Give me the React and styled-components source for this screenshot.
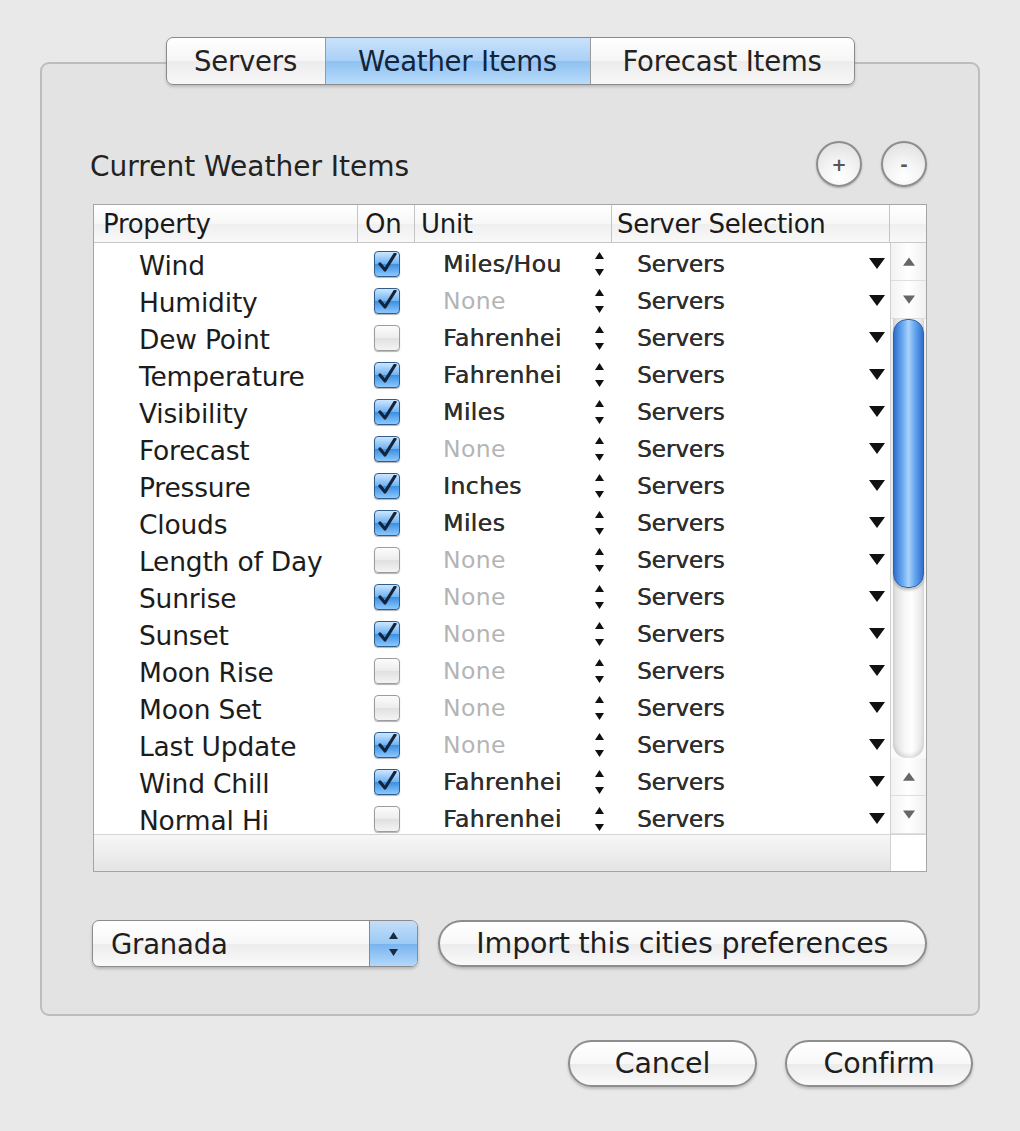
import React from 'react'
import styled, { createGlobalStyle } from 'styled-components'

const GlobalStyle = createGlobalStyle`
  html, body {
    margin: 0;
    padding: 0;
    background: #e9e9e9;
  }
  body {
    font-family: "DejaVu Sans", "Liberation Sans", sans-serif;
    color: #1c1c1c;
  }
`

const rows = [
  { name: 'Wind', on: true, unit: 'Miles/Hou' },
  { name: 'Humidity', on: true, unit: 'None', dim: true },
  { name: 'Dew Point', on: false, unit: 'Fahrenhei' },
  { name: 'Temperature', on: true, unit: 'Fahrenhei' },
  { name: 'Visibility', on: true, unit: 'Miles' },
  { name: 'Forecast', on: true, unit: 'None', dim: true },
  { name: 'Pressure', on: true, unit: 'Inches' },
  { name: 'Clouds', on: true, unit: 'Miles' },
  { name: 'Length of Day', on: false, unit: 'None', dim: true },
  { name: 'Sunrise', on: true, unit: 'None', dim: true },
  { name: 'Sunset', on: true, unit: 'None', dim: true },
  { name: 'Moon Rise', on: false, unit: 'None', dim: true },
  { name: 'Moon Set', on: false, unit: 'None', dim: true },
  { name: 'Last Update', on: true, unit: 'None', dim: true },
  { name: 'Wind Chill', on: true, unit: 'Fahrenhei' },
  { name: 'Normal Hi', on: false, unit: 'Fahrenhei' },
]

const Window = styled.div`
  width: 1020px;
  height: 1131px;
  box-sizing: border-box;
  padding-top: 37px;
  display: flex;
  flex-direction: column;
  align-items: center;
`

const TabBar = styled.div`
  display: flex;
  height: 48px;
  box-sizing: border-box;
  border: 1px solid #8a8a8a;
  border-radius: 7px;
  overflow: hidden;
  position: relative;
  z-index: 2;
  margin-bottom: -23px;
  box-shadow: 0 2px 3px rgba(0, 0, 0, 0.18);
  background: linear-gradient(#ffffff, #f6f6f6 50%, #ececec 51%, #f7f7f7);
`

const Tab = styled.div`
  width: ${p => p.w}px;
  display: flex;
  align-items: center;
  justify-content: center;
  font-size: 27.5px;
  letter-spacing: -0.2px;
  color: ${p => (p.active ? '#12233a' : '#222')};
  border-left: ${p => (p.first ? 'none' : '1px solid #9a9a9a')};
  background: ${p =>
    p.active
      ? 'linear-gradient(#c9e2fb, #a9d0f6 50%, #8fc1f1 51%, #b8dcfb)'
      : 'transparent'};
`

const GroupBox = styled.div`
  width: 940px;
  height: 954px;
  box-sizing: border-box;
  align-self: flex-start;
  margin-left: 40px;
  border: 2px solid #bdbdbd;
  border-radius: 9px;
  background: #e3e3e3;
  padding: 77px 51px 0 51px;
  display: flex;
  flex-direction: column;
`

const TitleRow = styled.div`
  height: 46px;
  display: flex;
  align-items: center;
  justify-content: space-between;
`

const Title = styled.div`
  font-size: 28px;
  color: #222;
  margin-left: -3px;
  padding-top: 4px;
`

const CircleGroup = styled.div`
  display: flex;
  gap: 19px;
`

const CircleButton = styled.div`
  width: 46px;
  height: 46px;
  box-sizing: border-box;
  border-radius: 50%;
  border: 2px solid #8d8d8d;
  background: radial-gradient(circle at 50% 80%, #ffffff 0%, #f4f4f4 40%, #dcdcdc 100%);
  box-shadow: 0 1px 2px rgba(0, 0, 0, 0.25);
  display: flex;
  align-items: center;
  justify-content: center;
  font-size: 18px;
  font-weight: bold;
  color: #555;
`

const Table = styled.div`
  margin-top: 17px;
  width: 834px;
  height: 668px;
  box-sizing: border-box;
  border: 1px solid #a5a5a5;
  background: #fff;
  display: flex;
  flex-direction: column;
`

const HeaderRow = styled.div`
  display: grid;
  grid-template-columns: 263px 57px 197px 278px 1fr;
  height: 37px;
  flex: none;
  border-bottom: 1px solid #c8c8c8;
  background: linear-gradient(#ffffff, #f7f7f7 50%, #efefef 51%, #f8f8f8);
`

const HeaderCell = styled.div`
  display: flex;
  align-items: center;
  padding-left: ${p => p.pad || 9}px;
  font-size: 26px;
  letter-spacing: -0.3px;
  color: #1a1a1a;
  overflow: hidden;
  white-space: nowrap;
  border-left: ${p => (p.first ? 'none' : '1px solid #c4c4c4')};
`

const Body = styled.div`
  flex: 1;
  display: flex;
  min-height: 0;
`

const RowList = styled.div`
  width: 796px;
  padding-top: 2px;
`

const Row = styled.div`
  display: grid;
  grid-template-columns: 263px 57px 197px 278px;
  height: 37px;
  align-items: center;
`

const PropCell = styled.div`
  padding-left: 45px;
  font-size: 26.5px;
  letter-spacing: -0.2px;
  color: #1c1c1c;
  padding-top: 3px;
  white-space: nowrap;
`

const OnCell = styled.div`
  display: flex;
  justify-content: center;
  padding-left: 3px;
`

const Check = styled.div`
  width: 26px;
  height: 26px;
  box-sizing: border-box;
  border-radius: 4px;
  border: 1px solid ${p => (p.on ? '#2f5d8c' : '#9c9c9c')};
  background: ${p =>
    p.on
      ? 'linear-gradient(#cde7ff, #6fb2f2 50%, #3d8fe0 51%, #8cc8ff)'
      : 'linear-gradient(#fcfcfc, #ececec 50%, #e0e0e0 51%, #f4f4f4)'};
  box-shadow: 0 1px 1px rgba(0, 0, 0, 0.3);
  display: flex;
  align-items: center;
  justify-content: center;
`

const UnitCell = styled.div`
  display: flex;
  align-items: center;
  justify-content: space-between;
  padding-left: 29px;
  padding-right: 5px;
`

const UnitText = styled.span`
  font-size: 23.5px;
  letter-spacing: 0.4px;
  color: ${p => (p.dim ? '#b4b4b4' : '#2e2e2e')};
  text-shadow: ${p => (p.dim ? 'none' : '0.5px 0 0 #2e2e2e')};
`

const ServerCell = styled.div`
  display: flex;
  align-items: center;
  justify-content: space-between;
  padding-left: 26px;
  padding-right: 4px;
  font-size: 23px;
  color: #2e2e2e;
  text-shadow: 0.5px 0 0 #2e2e2e;
`

const ScrollBar = styled.div`
  flex: 1;
  border-left: 1px solid #d0d0d0;
  display: flex;
  flex-direction: column;
  background: #fafafa;
`

const ArrowButton = styled.div`
  height: 37px;
  flex: none;
  display: flex;
  align-items: center;
  justify-content: center;
  border-bottom: 1px solid #dedede;
  background: linear-gradient(90deg, #f2f2f2, #ffffff 50%, #f0f0f0);
`

const Track = styled.div`
  flex: 1;
  margin: 0 2px;
  border-radius: 0 0 14px 14px;
  background: linear-gradient(90deg, #dcdcdc, #f8f8f8 40%, #ffffff 60%, #e2e2e2);
  box-shadow: inset 0 -3px 4px rgba(0, 0, 0, 0.12);
  display: flex;
  flex-direction: column;
`

const Thumb = styled.div`
  height: 267px;
  border-radius: 14px;
  border: 1px solid #2e62a8;
  background: linear-gradient(90deg, #2f6fd0, #6aaaf0 30%, #a9d2fb 50%, #6aaaf0 70%, #2f6fd0);
  box-shadow: 0 2px 3px rgba(0, 0, 0, 0.25);
`

const HScroll = styled.div`
  height: 36px;
  flex: none;
  display: flex;
  border-top: 1px solid #d4d4d4;
`

const HTrack = styled.div`
  width: 796px;
  background: linear-gradient(#f6f6f6, #ececec 60%, #e4e4e4);
`

const Corner = styled.div`
  flex: 1;
  background: #fff;
  border-left: 1px solid #d0d0d0;
`

const BottomRow = styled.div`
  margin-top: 48px;
  display: flex;
  gap: 20px;
  margin-left: -1px;
`

const Popup = styled.div`
  width: 326px;
  height: 47px;
  box-sizing: border-box;
  border: 1px solid #8c8c8c;
  border-radius: 7px;
  overflow: hidden;
  display: flex;
  box-shadow: 0 2px 3px rgba(0, 0, 0, 0.2);
  background: linear-gradient(#ffffff, #f7f7f7 50%, #ececec 51%, #fafafa);
`

const PopupLabel = styled.div`
  flex: 1;
  display: flex;
  align-items: center;
  padding-left: 18px;
  font-size: 27.5px;
  letter-spacing: -0.2px;
  color: #1e1e1e;
`

const PopupArrows = styled.div`
  width: 47px;
  display: flex;
  align-items: center;
  justify-content: center;
  border-left: 1px solid #6b8fb8;
  background: linear-gradient(#c3def9, #9ccaf4 50%, #78b3ee 51%, #b2d8fb);
`

const PillButton = styled.div`
  width: ${p => p.w}px;
  height: 47px;
  box-sizing: border-box;
  border: 2px solid #8d8d8d;
  border-radius: 24px;
  display: flex;
  align-items: center;
  justify-content: center;
  font-size: 28.5px;
  letter-spacing: -0.2px;
  white-space: nowrap;
  color: #1e1e1e;
  box-shadow: 0 2px 3px rgba(0, 0, 0, 0.2);
  background: linear-gradient(#ffffff, #f8f8f8 50%, #ebebeb 51%, #fafafa);
`

const Footer = styled.div`
  align-self: flex-end;
  margin-right: 47px;
  margin-top: 24px;
  display: flex;
  gap: 28px;
`

const Tri = ({ up, color = '#111', w = 16, h = 11 }) => (
  <svg width={w} height={h} viewBox="0 0 16 11">
    <path d={up ? 'M8 0 L16 11 L0 11 Z' : 'M0 0 L16 0 L8 11 Z'} fill={color} />
  </svg>
)

const Stepper = ({ color = '#111' }) => (
  <svg width="13" height="28" viewBox="0 0 13 28">
    <path d="M6.5 2 L11 9 L2 9 Z" fill={color} />
    <path d="M2 19 L11 19 L6.5 26 Z" fill={color} />
  </svg>
)

const CheckMark = () => (
  <svg width="22" height="22" viewBox="0 0 22 22">
    <path d="M4 11 L9 17 L19 1" fill="none" stroke="#14243a" strokeWidth="3.2" strokeLinecap="round" strokeLinejoin="round" />
  </svg>
)

export default function App() {
  return (
    <Window>
      <GlobalStyle />
      <TabBar>
        <Tab first w={158}>Servers</Tab>
        <Tab active w={264}>Weather Items</Tab>
        <Tab w={263}>Forecast Items</Tab>
      </TabBar>
      <GroupBox>
        <TitleRow>
          <Title>Current Weather Items</Title>
          <CircleGroup>
            <CircleButton>+</CircleButton>
            <CircleButton>-</CircleButton>
          </CircleGroup>
        </TitleRow>
        <Table>
          <HeaderRow>
            <HeaderCell first>Property</HeaderCell>
            <HeaderCell pad={7}>On</HeaderCell>
            <HeaderCell pad={6}>Unit</HeaderCell>
            <HeaderCell pad={5}>Server Selection</HeaderCell>
            <HeaderCell />
          </HeaderRow>
          <Body>
            <RowList>
              {rows.map(r => (
                <Row key={r.name}>
                  <PropCell>{r.name}</PropCell>
                  <OnCell>
                    <Check on={r.on}>{r.on && <CheckMark />}</Check>
                  </OnCell>
                  <UnitCell>
                    <UnitText dim={r.dim}>{r.unit}</UnitText>
                    <Stepper />
                  </UnitCell>
                  <ServerCell>
                    <span>Servers</span>
                    <Tri />
                  </ServerCell>
                </Row>
              ))}
            </RowList>
            <ScrollBar>
              <ArrowButton><Tri up color="#666" w={12} h={9} /></ArrowButton>
              <ArrowButton><Tri color="#666" w={12} h={9} /></ArrowButton>
              <Track>
                <Thumb />
              </Track>
              <ArrowButton><Tri up color="#666" w={12} h={9} /></ArrowButton>
              <ArrowButton><Tri color="#666" w={12} h={9} /></ArrowButton>
            </ScrollBar>
          </Body>
          <HScroll>
            <HTrack />
            <Corner />
          </HScroll>
        </Table>
        <BottomRow>
          <Popup>
            <PopupLabel>Granada</PopupLabel>
            <PopupArrows>
              <Stepper color="#1a2a40" />
            </PopupArrows>
          </Popup>
          <PillButton w={490}>Import this cities preferences</PillButton>
        </BottomRow>
      </GroupBox>
      <Footer>
        <PillButton w={189}>Cancel</PillButton>
        <PillButton w={188}>Confirm</PillButton>
      </Footer>
    </Window>
  )
}
